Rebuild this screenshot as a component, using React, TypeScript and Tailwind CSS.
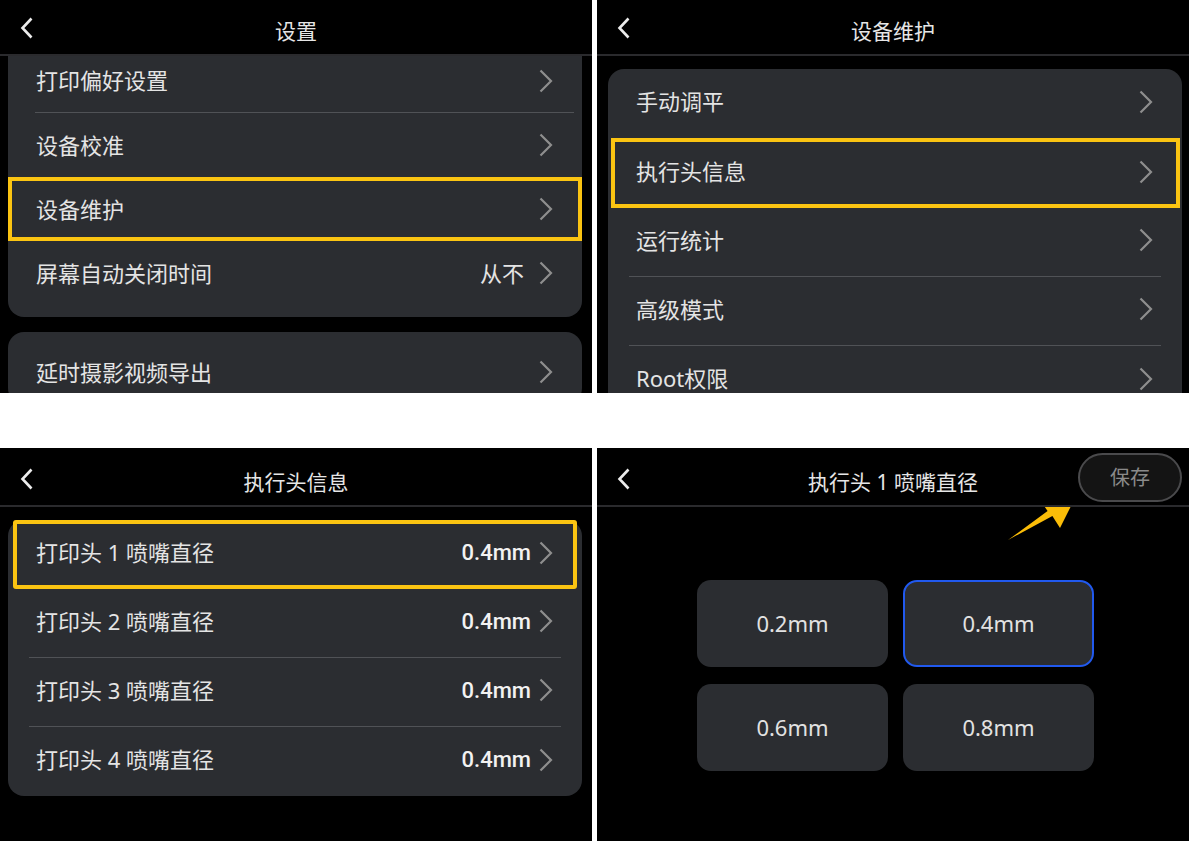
import React from 'react';

const font = "font-['Noto_Sans','Noto_Sans_CJK_SC',sans-serif]";

const Chevron = () => (
  <svg width="14" height="24" viewBox="0 0 14 24" className="shrink-0">
    <polyline points="1.5,1.5 12,12 1.5,22.5" fill="none" stroke="#8e8e8e" strokeWidth="2.2" />
  </svg>
);

const Back = () => (
  <svg width="14" height="22" viewBox="0 0 14 22">
    <polyline points="11.5,1.5 2.5,11 11.5,20.5" fill="none" stroke="#ececec" strokeWidth="2.6" />
  </svg>
);

const Header = ({ title, top, save }: { title: string; top?: boolean; save?: boolean }) => (
  <div
    className={
      top
        ? 'relative z-10 -mt-[3px] grid h-[59px] shrink-0 grid-cols-[1fr_auto_1fr] items-center border-b-2 border-[#2a2a2d] bg-black'
        : 'relative z-10 grid h-[59px] shrink-0 grid-cols-[1fr_auto_1fr] items-center border-b-2 border-[#2a2a2d] bg-black'
    }
  >
    <div className="pl-[20px] pt-[5px]">
      <Back />
    </div>
    <div className="pt-[13px] text-[21px] text-[#e6e6e6]">{title}</div>
    <div className="flex justify-end pr-[7px] pt-[2px]">
      {save && (
        <div className="flex h-[49px] w-[104px] items-center justify-center rounded-full border-2 border-[#4a4a4c] bg-[#141414] text-[20px] text-[#8a8a8a]">
          保存
        </div>
      )}
    </div>
  </div>
);

const settings = [
  { label: '打印偏好设置', divider: true },
  { label: '设备校准' },
  { label: '设备维护', on: true },
  { label: '屏幕自动关闭时间', value: '从不' },
];

const maintenance = [
  { label: '手动调平' },
  { label: '执行头信息', on: true },
  { label: '运行统计', divider: true },
  { label: '高级模式', divider: true },
  { label: 'Root权限' },
];

const heads = [1, 2, 3, 4];
const sizes = ['0.2mm', '0.4mm', '0.6mm', '0.8mm'];

export default function App() {
  return (
    <div className={`grid h-[841px] w-[1189px] grid-cols-[592px_592px] grid-rows-[393px_393px] gap-x-[5px] gap-y-[55px] bg-white ${font}`}>
      {/* 设置 */}
      <div className="flex flex-col overflow-hidden bg-black">
        <Header title="设置" top />
        <div className="flex-1 overflow-hidden">
          <div className="ml-[8px] mr-[10px] -mt-[19px] rounded-[16px] bg-[#2b2d31] py-[12px]">
            {settings.map((s) => (
              <div key={s.label}>
                <div
                  className={
                    s.on
                      ? 'flex h-[64px] items-center border-4 border-[#fbc412] pl-[24px] pr-[25px]'
                      : s.divider
                        ? 'flex h-[63px] items-center pl-[28px] pr-[29px]'
                        : 'flex h-[64px] items-center pl-[28px] pr-[29px]'
                  }
                >
                  <span className="flex-1 text-[22px] text-[#e4e4e4]">{s.label}</span>
                  {s.value && <span className="mr-[15px] text-[22px] text-[#e4e4e4]">{s.value}</span>}
                  <Chevron />
                </div>
                {s.divider && <div className="ml-[27px] mr-[8px] h-px bg-[#505256]" />}
              </div>
            ))}
          </div>
          <div className="ml-[8px] mr-[10px] mt-[15px] rounded-[16px] bg-[#2b2d31] pt-[8px]">
            <div className="flex h-[64px] items-center pl-[28px] pr-[29px]">
              <span className="flex-1 text-[22px] text-[#e4e4e4]">延时摄影视频导出</span>
              <Chevron />
            </div>
          </div>
        </div>
      </div>

      {/* 设备维护 */}
      <div className="flex flex-col overflow-hidden bg-black">
        <Header title="设备维护" top />
        <div className="flex-1 overflow-hidden">
          <div className="ml-[11px] mr-[7px] mt-[13px] rounded-[16px] bg-[#2b2d31]">
            {maintenance.map((s) => (
              <div key={s.label}>
                <div
                  className={
                    s.on
                      ? 'ml-[3px] mr-[2px] flex h-[70px] items-center border-4 border-[#fbc412] pb-[3px] pl-[21px] pr-[23px]'
                      : s.divider
                        ? 'flex h-[68px] items-center pb-[4px] pl-[28px] pr-[29px]'
                        : 'flex h-[69px] items-center pb-[4px] pl-[28px] pr-[29px]'
                  }
                >
                  <span className="flex-1 text-[22px] text-[#e4e4e4]">{s.label}</span>
                  <Chevron />
                </div>
                {s.divider && <div className="mx-[21px] h-px bg-[#505256]" />}
              </div>
            ))}
          </div>
        </div>
      </div>

      {/* 执行头信息 */}
      <div className="flex flex-col overflow-hidden bg-black">
        <Header title="执行头信息" />
        <div className="ml-[8px] mr-[10px] mt-[13px] rounded-[16px] bg-[#2b2d31]">
          {heads.map((n) => (
            <div key={n}>
              <div
                className={
                  n === 1
                    ? 'mx-[5px] flex h-[69px] items-center rounded-[3px] border-4 border-[#fbc412] pb-[4px] pl-[19px] pr-[20px]'
                    : n < 4
                      ? 'flex h-[68px] items-center pb-[4px] pl-[28px] pr-[29px]'
                      : 'flex h-[69px] items-center pb-[4px] pl-[28px] pr-[29px]'
                }
              >
                <span className="flex-1 text-[22px] text-[#e4e4e4]">打印头 {n} 喷嘴直径</span>
                <span className="mr-[8px] font-['Roboto',sans-serif] text-[22px] font-medium text-[#f2f2f2]">0.4mm</span>
                <Chevron />
              </div>
              {n > 1 && n < 4 && <div className="mx-[21px] h-px bg-[#505256]" />}
            </div>
          ))}
        </div>
      </div>

      {/* 执行头 1 喷嘴直径 */}
      <div className="relative flex flex-col overflow-hidden bg-black">
        <Header title="执行头 1 喷嘴直径" save />
        <div className="grid grid-cols-[191px_191px] grid-rows-[87px_87px] gap-x-[15px] gap-y-[17px] pl-[100px] pt-[73px]">
          {sizes.map((s) => (
            <div
              key={s}
              className={
                s === '0.4mm'
                  ? 'flex items-center justify-center rounded-[14px] border-2 border-[#2159ee] bg-[#2b2d31] text-[22px] text-[#e2e2e2]'
                  : 'flex items-center justify-center rounded-[14px] bg-[#2b2d31] text-[22px] text-[#e2e2e2]'
              }
            >
              {s}
            </div>
          ))}
        </div>
        <svg className="absolute left-0 top-0" width="592" height="120" viewBox="0 0 592 120">
          <polygon points="411,92 450.6,63 443,52 479,48 463,80 455.4,68" fill="#fbbd08" />
        </svg>
      </div>
    </div>
  );
}
